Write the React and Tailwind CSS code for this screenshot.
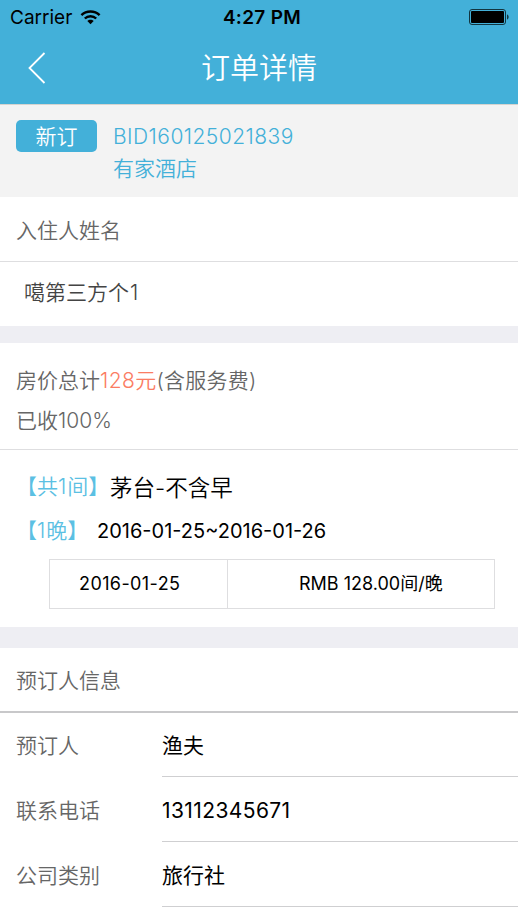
import React from 'react';

const bookingInfo = [
  { label: '预订人', value: '渔夫' },
  { label: '联系电话', value: '13112345671', numeric: true },
  { label: '公司类别', value: '旅行社' }
];

const StatusBar = () => (
  <div className="grid grid-cols-[1fr_auto_1fr] items-center h-[34px] pt-0.5 px-[9px] text-black">
    <div className="flex items-center gap-2 pl-px">
      <span className="text-[19px] leading-8">Carrier</span>
      <svg className="-mt-[3px]" width="21" height="16" viewBox="0 0 21 16" fill="none" stroke="currentColor" strokeWidth="2.4">
        <path d="M1.4 6.1C6.4 1.2 14.6 1.2 19.6 6.1" />
        <path d="M4.8 9.5C8 6.4 13 6.4 16.2 9.5" />
        <path d="M10.5 15.2L7.3 12C9 10.3 12 10.3 13.7 12Z" fill="currentColor" stroke="none" />
      </svg>
    </div>
    <span className="pl-[6px] text-center text-[19px] leading-8 font-semibold tracking-[0.3px] whitespace-nowrap">4:27 PM</span>
    <svg className="justify-self-end -mt-0.5" width="40" height="16" viewBox="0 0 40 16">
      <rect x="0.5" y="0.5" width="36" height="15" rx="2.5" fill="none" stroke="#123540" />
      <rect x="2" y="2" width="33" height="12" rx="1" fill="#000" />
      <path d="M38 5.5C40.2 6 40.2 10 38 10.5Z" fill="#123540" />
    </svg>
  </div>
);

const Header = () => (
  <header className="h-[104px] bg-[#43b0d9]">
    <StatusBar />
    <div className="grid grid-cols-[1fr_auto_1fr] items-center h-[70px]">
      <button className="pl-7 -mt-0.5">
        <svg width="18" height="32" viewBox="0 0 18 32" fill="none" stroke="#fff" strokeWidth="1.8">
          <path d="M16.5 1L1.5 16L16.5 31" />
        </svg>
      </button>
      <h1 className="text-[29px] leading-[70px] font-[350] text-white">订单详情</h1>
    </div>
  </header>
);

// count and unit inside lenticular brackets, e.g. 【1晚】
const Tag = ({ prefix, count, unit }) => (
  <span className="font-[350] text-[#5bc0e3] whitespace-nowrap">
    【{prefix}<span className="tracking-[1px]">{count}</span>{unit}】
  </span>
);

const App = () => {
  return (
    <div className="w-[518px] h-[920px] overflow-hidden bg-white font-['Inter','Noto_Sans_CJK_SC',sans-serif] text-[21px] text-[#666]">
      <Header />

      {/* Order number */}
      <section className="flex gap-4 h-[93px] pt-[15px] pl-4 bg-[#f3f3f3] border-t border-[#d5d3cf] text-[#43b0d9]">
        <span className="w-[81px] h-8 rounded-[5px] bg-[#43b0d9] text-white text-center leading-[34px] font-[350]">新订</span>
        <div className="pt-px leading-8 font-[350]">
          <p className="tracking-[0.45px]">BID160125021839</p>
          <p>有家酒店</p>
        </div>
      </section>

      {/* Guest */}
      <section>
        <h2 className="h-[65px] pl-4 leading-[67px] border-b border-[#dedee0] font-[350]">入住人姓名</h2>
        <p className="h-16 pl-6 leading-[61px] font-[350] text-[#444]">噶第三方个<span className="pl-px">1</span></p>
      </section>
      <div className="h-[17px] bg-[#eeeef3]" />

      {/* Price */}
      <section className="h-[107px] pt-[18px] pl-4 leading-10 border-b border-[#dedee0] font-[350]">
        <p>房价总计<span className="text-[#fb7c63] tracking-[0.4px]">128元</span><span className="tracking-[0.2px]">(含服务费)</span></p>
        <p>已收100%</p>
      </section>

      {/* Room */}
      <section className="h-[177px] pt-[15px] text-black">
        <div className="flex h-11 pl-[16px] leading-[44px]">
          <div className="w-[94px]"><Tag prefix="共" count={1} unit="间" /></div>
          <span className="text-[22.5px] font-[350] leading-[46px]">茅台-不含早</span>
        </div>
        <div className="flex h-11 pl-[16px] leading-[44px]">
          <div className="w-[81px]"><Tag count={1} unit="晚" /></div>
          <span className="text-[20px]">2016-01-25~2016-01-26</span>
        </div>
        <div className="flex w-[446px] h-[50px] mt-[6px] ml-[49px] border border-[#dedee0] text-[18px] leading-[48px]">
          <span className="w-[177px] pl-[29px] tracking-[0.4px]">2016-01-25</span>
          <span className="flex-1 pl-[71px] border-l border-[#dedee0]">RMB 128.00间/晚</span>
        </div>
      </section>
      <div className="h-[21px] bg-[#eeeef3]" />

      {/* Booker */}
      <section>
        <h2 className="h-[65px] pl-4 leading-[65px] border-b-2 border-[#c8c8ca] font-[350]">预订人信息</h2>
        <div className="-mt-px">
          {bookingInfo.map((row) => (
            <div key={row.label} className="flex h-[65px] pl-4 leading-[67px]">
              <span className="w-[146px] font-[350]">{row.label}</span>
              <span className={`flex-1 border-b border-[#cfcfd1] text-black ${row.numeric ? 'tracking-[0.4px]' : ''}`}>{row.value}</span>
            </div>
          ))}
        </div>
      </section>
    </div>
  );
};

export default App;
